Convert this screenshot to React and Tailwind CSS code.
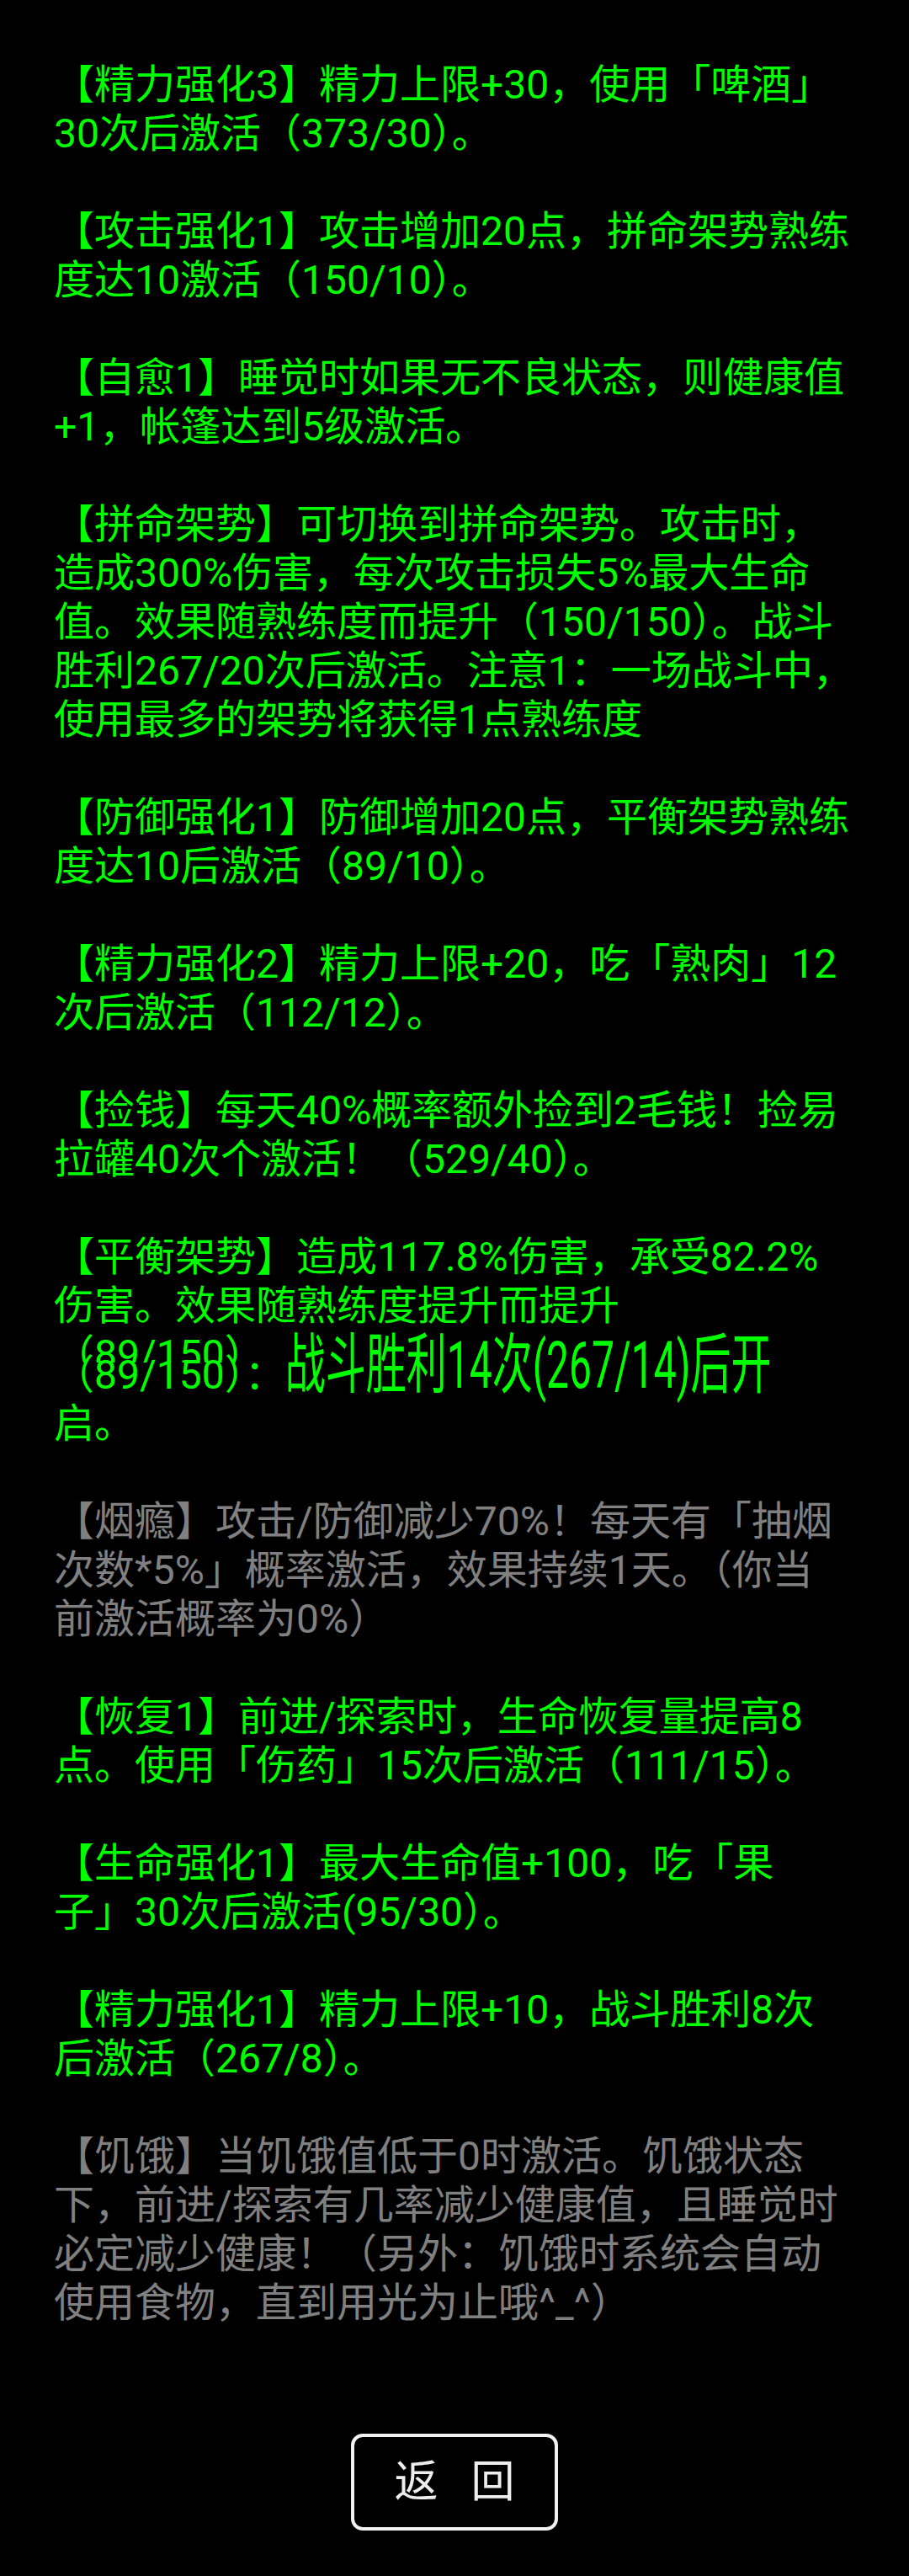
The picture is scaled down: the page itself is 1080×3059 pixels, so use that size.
import React from "react";

const GREEN = "text-[#00ff00]";
const GRAY = "text-[#808080]";

const paras = [
  { c: GREEN, lines: ["【精力强化3】精力上限+30，使用「啤酒」", "30次后激活（373/30）。"] },
  { c: GREEN, lines: ["【攻击强化1】攻击增加20点，拼命架势熟练", "度达10激活（150/10）。"] },
  { c: GREEN, lines: ["【自愈1】睡觉时如果无不良状态，则健康值", "+1，帐篷达到5级激活。"] },
  {
    c: GREEN,
    lines: [
      "【拼命架势】可切换到拼命架势。攻击时，",
      "造成300%伤害，每次攻击损失5%最大生命",
      "值。效果随熟练度而提升（150/150）。战斗",
      "胜利267/20次后激活。注意1：一场战斗中，",
      "使用最多的架势将获得1点熟练度",
    ],
  },
  { c: GREEN, lines: ["【防御强化1】防御增加20点，平衡架势熟练", "度达10后激活（89/10）。"] },
  { c: GREEN, lines: ["【精力强化2】精力上限+20，吃「熟肉」12", "次后激活（112/12）。"] },
  { c: GREEN, lines: ["【捡钱】每天40%概率额外捡到2毛钱！捡易", "拉罐40次个激活！（529/40）。"] },
  { c: GREEN, glitch: true, lines: ["【平衡架势】造成117.8%伤害，承受82.2%", "伤害。效果随熟练度提升而提升", null, "启。"] },
  {
    c: GRAY,
    lines: ["【烟瘾】攻击/防御减少70%！每天有「抽烟", "次数*5%」概率激活，效果持续1天。（你当", "前激活概率为0%）"],
  },
  { c: GREEN, lines: ["【恢复1】前进/探索时，生命恢复量提高8", "点。使用「伤药」15次后激活（111/15）。"] },
  { c: GREEN, lines: ["【生命强化1】最大生命值+100，吃「果", "子」30次后激活(95/30）。"] },
  { c: GREEN, lines: ["【精力强化1】精力上限+10，战斗胜利8次", "后激活（267/8）。"] },
  {
    c: GRAY,
    lines: [
      "【饥饿】当饥饿值低于0时激活。饥饿状态",
      "下，前进/探索有几率减少健康值，且睡觉时",
      "必定减少健康！（另外：饥饿时系统会自动",
      "使用食物，直到用光为止哦^_^）",
    ],
  },
];

function GlitchLine() {
  return (
    <div className="relative h-[82px] whitespace-nowrap">
      <div className="pt-[24px]">
        <div className="h-[58px]">
          <span>（89/150）：</span>
          <span className="inline-block origin-[50%_46px] scale-y-[1.63]">战斗胜利14次(267/14)后开</span>
        </div>
      </div>
      <div className="absolute left-0 top-0 h-[38px] overflow-hidden">（89/150）</div>
    </div>
  );
}

export default function App() {
  return (
    <div className="min-h-[3059px] bg-black px-[64px] pt-[72px] font-['Roboto','Noto_Sans_CJK_SC',sans-serif]">
      <div className="flex flex-col gap-[58px] text-[48px] leading-[58px]">
        {paras.map((p, i) => (
          <div key={i} className={p.c}>
            {p.lines.map((l, j) =>
              l === null ? (
                <GlitchLine key={j} />
              ) : (
                <div key={j} className="whitespace-nowrap">
                  {l}
                </div>
              )
            )}
          </div>
        ))}
      </div>
      <div className="mt-[126px] flex justify-center">
        <button className="flex h-[115px] w-[246px] items-center justify-center gap-[39px] rounded-[14px] border-[4px] border-[#f2f2f2] bg-black text-[52px] leading-none text-[#eeeeee]">
          <span>返</span>
          <span>回</span>
        </button>
      </div>
    </div>
  );
}
